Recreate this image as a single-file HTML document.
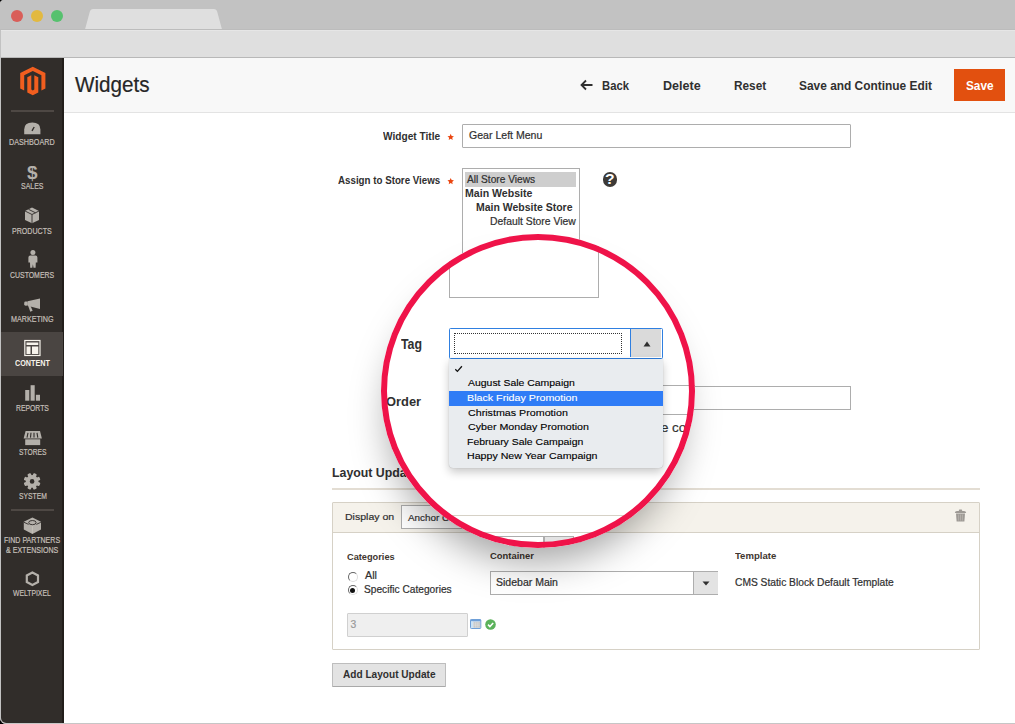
<!DOCTYPE html>
<html><head><meta charset="utf-8"><style>
html,body{margin:0;padding:0;width:1015px;height:724px;overflow:hidden;background:#000;}
#win{position:absolute;left:0;top:0;width:1015px;height:724px;overflow:hidden;border-radius:4px 0 0 6px;background:#c4c4c4;font-family:"Liberation Sans", sans-serif;}
.t{position:absolute;white-space:nowrap;font-family:"Liberation Sans", sans-serif;}
.r{position:absolute;}
.reg{-webkit-text-stroke-width:0.2px;}
svg.r{overflow:visible;}
</style></head><body>
<div id="win"><div class="r" style="left:0px;top:0px;width:1015px;height:30px;background:#c2c2c2;"></div><div class="r" style="left:11px;top:10px;width:12px;height:12px;border-radius:50%;background:#d95e59;"></div><div class="r" style="left:31px;top:10px;width:12px;height:12px;border-radius:50%;background:#e2b940;"></div><div class="r" style="left:51px;top:10px;width:12px;height:12px;border-radius:50%;background:#56c16e;"></div><svg class="r" style="left:0;top:0" width="300" height="30"><path d="M85 29.5 L90 11 Q91 9 93 9 L214 9 Q216 9 217 11 L222 29.5 Z" fill="#dfdfdf"/></svg><div class="r" style="left:0px;top:29px;width:1015px;height:1px;background:#bcbcbc;"></div><div class="r" style="left:1px;top:30px;width:1014px;height:1px;background:#e6e6e6;"></div><div class="r" style="left:1px;top:31px;width:1014px;height:26px;background:#dfdfdf;"></div><div class="r" style="left:1px;top:57px;width:1014px;height:1px;background:#b8b8b8;"></div><div class="r" style="left:0px;top:30px;width:1px;height:694px;background:#c2c2c2;"></div><div class="r" style="left:0px;top:723px;width:1015px;height:1px;background:#c6c6c6;"></div><div class="r" style="left:1px;top:58px;width:1014px;height:665px;background:#ffffff;border-bottom-left-radius:5px;"></div><div class="r" style="left:64px;top:58px;width:951px;height:54px;background:#f8f8f8;"></div><div class="r" style="left:64px;top:112px;width:951px;height:1px;background:#e3e3e3;"></div><div class="t  reg" style="left:74.50px;top:74.00px;font-size:21.95px;line-height:21.95px;font-weight:400;color:#262626;transform:scaleX(0.9424);transform-origin:0 0;">Widgets</div><svg class="r" style="left:580px;top:79px" width="14" height="12"><path d="M1.5 6 H12.5 M6 1.5 L1.5 6 L6 10.5" stroke="#303030" stroke-width="1.8" fill="none"/></svg><div class="t  bld" style="left:601.74px;top:80.00px;font-size:12.79px;line-height:12.79px;font-weight:700;color:#303030;transform:scaleX(0.8811);transform-origin:0 0;">Back</div><div class="t  bld" style="left:662.75px;top:80.00px;font-size:12.79px;line-height:12.79px;font-weight:700;color:#303030;transform:scaleX(0.9814);transform-origin:0 0;">Delete</div><div class="t  bld" style="left:733.70px;top:80.00px;font-size:12.79px;line-height:12.79px;font-weight:700;color:#303030;transform:scaleX(0.9231);transform-origin:0 0;">Reset</div><div class="t  bld" style="left:798.94px;top:80.00px;font-size:12.79px;line-height:12.79px;font-weight:700;color:#303030;transform:scaleX(0.9319);transform-origin:0 0;">Save and Continue Edit</div><div class="r" style="left:954px;top:69px;width:51px;height:32px;background:#e2500f;"></div><div class="t  bld" style="left:965.65px;top:80.00px;font-size:12.79px;line-height:12.79px;font-weight:700;color:#ffffff;transform:scaleX(0.9221);transform-origin:0 0;">Save</div><div class="r" style="left:1px;top:58px;width:63px;height:665px;background:#312d2a;border-bottom-left-radius:5px;"></div><div class="r" style="left:62px;top:58px;width:2px;height:665px;background:#221e1b;"></div><svg class="r" style="left:0;top:58px" width="64" height="45"><g transform="translate(0,-58)" fill="#f15e1f"><path d="M20.2 73 L32.8 66.8 L45.4 73 L45.4 88.4 L41.4 90.6 L41.4 75.3 L32.8 71 L24.2 75.3 L24.2 90.6 L20.2 88.4 Z"/><path d="M27.3 77.3 L31.3 75.3 L31.3 89.6 L32.8 90.4 L34.3 89.6 L34.3 75.3 L38.3 77.3 L38.3 92.6 L32.8 95.2 L27.3 92.6 Z"/></g></svg><div class="r" style="left:11px;top:110px;width:43px;height:2px;background:#4e4844;"></div><div class="r" style="left:1px;top:332px;width:62px;height:44px;background:#4a4542;"></div><div class="t  reg" style="left:9.41px;top:138.00px;font-size:8.58px;line-height:8.58px;font-weight:400;color:#c4bfb8;transform:scaleX(0.8396);transform-origin:0 0;">DASHBOARD</div><div class="t  reg" style="left:21.39px;top:182.00px;font-size:8.58px;line-height:8.58px;font-weight:400;color:#c4bfb8;transform:scaleX(0.8105);transform-origin:0 0;">SALES</div><div class="t  reg" style="left:12.42px;top:227.00px;font-size:8.58px;line-height:8.58px;font-weight:400;color:#c4bfb8;transform:scaleX(0.8245);transform-origin:0 0;">PRODUCTS</div><div class="t  reg" style="left:10.15px;top:271.00px;font-size:8.58px;line-height:8.58px;font-weight:400;color:#c4bfb8;transform:scaleX(0.8076);transform-origin:0 0;">CUSTOMERS</div><div class="t  reg" style="left:10.91px;top:315.00px;font-size:8.58px;line-height:8.58px;font-weight:400;color:#c4bfb8;transform:scaleX(0.8357);transform-origin:0 0;">MARKETING</div><div class="t  bld" style="left:14.71px;top:359.00px;font-size:8.58px;line-height:8.58px;font-weight:700;color:#f7f3eb;transform:scaleX(0.8432);transform-origin:0 0;">CONTENT</div><div class="t  reg" style="left:15.94px;top:404.00px;font-size:8.58px;line-height:8.58px;font-weight:400;color:#c4bfb8;transform:scaleX(0.7952);transform-origin:0 0;">REPORTS</div><div class="t  reg" style="left:18.60px;top:448.00px;font-size:8.58px;line-height:8.58px;font-weight:400;color:#c4bfb8;transform:scaleX(0.7828);transform-origin:0 0;">STORES</div><div class="t  reg" style="left:18.60px;top:492.00px;font-size:8.58px;line-height:8.58px;font-weight:400;color:#c4bfb8;transform:scaleX(0.7867);transform-origin:0 0;">SYSTEM</div><div class="t  reg" style="left:4.22px;top:536.00px;font-size:8.58px;line-height:8.58px;font-weight:400;color:#c4bfb8;transform:scaleX(0.8209);transform-origin:0 0;">FIND PARTNERS</div><div class="t  reg" style="left:6.05px;top:546.00px;font-size:8.58px;line-height:8.58px;font-weight:400;color:#c4bfb8;transform:scaleX(0.8240);transform-origin:0 0;">&amp; EXTENSIONS</div><div class="t  reg" style="left:13.47px;top:589.00px;font-size:8.58px;line-height:8.58px;font-weight:400;color:#c4bfb8;transform:scaleX(0.7947);transform-origin:0 0;">WELTPIXEL</div><div class="r" style="left:11px;top:509px;width:43px;height:2px;background:#4e4844;"></div><svg class="r" style="left:0;top:0" width="64" height="724" fill="#b4b0aa"><path d="M24.2 134.2 L24.2 129.5 Q24.2 122.6 32.3 122.6 Q40.4 122.6 40.4 129.5 L40.4 134.2 Z"/><path d="M32 130.8 L34.2 127" stroke="#312d2a" stroke-width="1.4"/><text x="32.3" y="178.5" text-anchor="middle" font-family="Liberation Sans" font-weight="700" font-size="19">$</text><path d="M32 207.5 L39 211 L39 220 L32 223.2 L25 220 L25 211 Z"/><path d="M25 211 L32 214.5 L39 211 M32 214.5 L32 223 M28.5 209.3 L35.5 212.8" stroke="#312d2a" stroke-width="0.9" fill="none"/><circle cx="32.9" cy="252.6" r="2.5"/><path d="M30.2 255.6 L35.6 255.6 Q37.3 255.8 37.4 257.6 L37.4 262.6 L35.8 262.6 L35.6 267.8 L33.5 267.8 L32.9 264.2 L32.3 267.8 L30.2 267.8 L30 262.6 L28.4 262.6 L28.4 257.6 Q28.5 255.8 30.2 255.6 Z"/><path d="M27.5 301.3 L40 298.5 L40 309 L27.5 305.7 Z"/><rect x="24.2" y="301.5" width="3.6" height="4.2" rx="1.4"/><path d="M28 305.4 L30.6 305.9 L32.6 310.8 L30.3 311.7 Z"/><rect x="24.8" y="340.5" width="15.2" height="15" fill="none" stroke="#f7f3eb" stroke-width="1.2"/><rect x="26.5" y="342.5" width="11.8" height="2.5" fill="#f7f3eb"/><rect x="26.5" y="346.5" width="4" height="7.5" fill="#f7f3eb"/><rect x="32" y="346.5" width="6.3" height="7.5" fill="#f7f3eb"/><rect x="25.2" y="390" width="4.1" height="10.7"/><rect x="30.6" y="385.2" width="4.1" height="15.5"/><rect x="35.9" y="394.8" width="4.1" height="5.9"/><path d="M25.6 430.9 L40 430.9 L41.9 438.6 L23.6 438.6 Z"/><path d="M28 432.8 L27 437.6 M31 432.8 L30.5 437.6 M34 432.8 L34 437.6 M37 432.8 L37.8 437.6" stroke="#312d2a" stroke-width="1.1"/><rect x="25.2" y="439.3" width="15" height="5.8"/><g transform="translate(32.1,481.4)"><rect x="-1.8" y="-8.4" width="3.6" height="4" rx="1" transform="rotate(22.5)"/><rect x="-1.8" y="-8.4" width="3.6" height="4" rx="1" transform="rotate(67.5)"/><rect x="-1.8" y="-8.4" width="3.6" height="4" rx="1" transform="rotate(112.5)"/><rect x="-1.8" y="-8.4" width="3.6" height="4" rx="1" transform="rotate(157.5)"/><rect x="-1.8" y="-8.4" width="3.6" height="4" rx="1" transform="rotate(202.5)"/><rect x="-1.8" y="-8.4" width="3.6" height="4" rx="1" transform="rotate(247.5)"/><rect x="-1.8" y="-8.4" width="3.6" height="4" rx="1" transform="rotate(292.5)"/><rect x="-1.8" y="-8.4" width="3.6" height="4" rx="1" transform="rotate(337.5)"/><circle r="6.3" /><circle r="2.3" fill="#312d2a"/></g><path d="M32.4 517.6 L41 521.7 L41 529.6 L32.4 534 L23.8 529.6 L23.8 521.7 Z"/><path d="M24 522.3 L28.6 524.4 M36.3 524.4 L40.8 522.3" stroke="#312d2a" stroke-width="0.9" fill="none"/><ellipse cx="32.4" cy="522.6" rx="3.7" ry="2.1" fill="none" stroke="#312d2a" stroke-width="0.9"/><path d="M32.4 526 V533.5" stroke="#cfcac3" stroke-width="0.6"/><path d="M32.4 572.5 L38 575.5 L38 582 L32.4 585 L26.8 582 L26.8 575.5 Z" fill="none" stroke="#b4b0aa" stroke-width="2.2"/></svg><div class="t  bld" style="left:383.20px;top:131.00px;font-size:11.48px;line-height:11.48px;font-weight:700;color:#303030;transform:scaleX(0.8827);transform-origin:0 0;">Widget Title</div><svg class="r" style="left:0;top:0" width="1" height="1"><polygon points="450.70,133.80 451.64,135.91 453.93,136.15 452.22,137.69 452.70,139.95 450.70,138.80 448.70,139.95 449.18,137.69 447.47,136.15 449.76,135.91" fill="#ea4610"/></svg><div class="r" style="left:462px;top:124px;width:389px;height:24px;border:1px solid #adadad;border-radius:1px;box-sizing:border-box;background:#fff;"></div><div class="t  reg" style="left:469.37px;top:130.00px;font-size:10.61px;line-height:10.61px;font-weight:400;color:#303030;transform:scaleX(0.9946);transform-origin:0 0;">Gear Left Menu</div><div class="t  bld" style="left:338.06px;top:175.00px;font-size:11.48px;line-height:11.48px;font-weight:700;color:#303030;transform:scaleX(0.8504);transform-origin:0 0;">Assign to Store Views</div><svg class="r" style="left:0;top:0" width="1" height="1"><polygon points="450.70,178.00 451.64,180.11 453.93,180.35 452.22,181.89 452.70,184.15 450.70,183.00 448.70,184.15 449.18,181.89 447.47,180.35 449.76,180.11" fill="#ea4610"/></svg><div class="r" style="left:462px;top:168px;width:118px;height:132px;border:1px solid #adadad;box-sizing:border-box;background:#fff;"></div><div class="r" style="left:465px;top:172px;width:111px;height:15px;background:#cecece;"></div><div class="t  reg" style="left:467.07px;top:175.00px;font-size:10.03px;line-height:10.03px;font-weight:400;color:#303030;transform:scaleX(1.0135);transform-origin:0 0;">All Store Views</div><div class="t  bld" style="left:465.39px;top:189.00px;font-size:10.03px;line-height:10.03px;font-weight:700;color:#303030;transform:scaleX(1.0558);transform-origin:0 0;">Main Website</div><div class="t  bld" style="left:475.69px;top:203.00px;font-size:10.03px;line-height:10.03px;font-weight:700;color:#303030;transform:scaleX(1.0468);transform-origin:0 0;">Main Website Store</div><div class="t  reg" style="left:489.64px;top:217.00px;font-size:10.03px;line-height:10.03px;font-weight:400;color:#303030;transform:scaleX(1.0366);transform-origin:0 0;">Default Store View</div><div class="r" style="left:602.6px;top:172.2px;width:14.8px;height:14.8px;border-radius:50%;background:#3d3a37;"></div><div class="t  bld" style="left:604.79px;top:173.00px;font-size:13.95px;line-height:13.95px;font-weight:700;color:#ffffff;transform:scaleX(1.1300);transform-origin:0 0;">?</div><div class="r" style="left:540px;top:386px;width:311px;height:24px;border:1px solid #adadad;box-sizing:border-box;background:#fff;"></div><div class="t  bld" style="left:332.17px;top:467.00px;font-size:12.94px;line-height:12.94px;font-weight:700;color:#303030;transform:scaleX(0.9528);transform-origin:0 0;">Layout Updates</div><div class="r" style="left:332px;top:488px;width:648px;height:2px;background:#e3ddd3;"></div><div class="r" style="left:332px;top:502px;width:648px;height:148px;border:1px solid #d6d1c6;box-sizing:border-box;background:#fff;border-radius:1px;"></div><div class="r" style="left:333px;top:503px;width:646px;height:29px;background:#f5f2eb;border-bottom:1px solid #d6d1c6;"></div><div class="t  reg" style="left:345.23px;top:512.00px;font-size:9.88px;line-height:9.88px;font-weight:400;color:#303030;transform:scaleX(1.0675);transform-origin:0 0;">Display on</div><div class="r" style="left:401px;top:505px;width:170px;height:24px;border:1px solid #adadad;box-sizing:border-box;background:#fff;"></div><div class="t  reg" style="left:407.88px;top:513.00px;font-size:9.883720930232558px;line-height:9.883720930232558px;font-weight:400;color:#303030;">Anchor Categories</div><svg class="r" style="left:954px;top:509px" width="13" height="13" fill="#9e9a95"><path d="M0.8 4 Q1 2.2 3 2 L10 2 Q12 2.2 12.2 4 Z"/><rect x="4.8" y="0.6" width="3.4" height="1.8" rx="0.8"/><path d="M2 4.6 L11 4.6 L10.4 12.4 L2.6 12.4 Z"/><path d="M4.6 5.5 V11.6 M6.5 5.5 V11.6 M8.4 5.5 V11.6" stroke="#bdb9b3" stroke-width="0.7"/></svg><div class="t  bld" style="left:347.33px;top:553.00px;font-size:9.16px;line-height:9.16px;font-weight:700;color:#41362f;transform:scaleX(1.0064);transform-origin:0 0;">Categories</div><div class="t  bld" style="left:489.92px;top:552.00px;font-size:9.16px;line-height:9.16px;font-weight:700;color:#41362f;transform:scaleX(1.0272);transform-origin:0 0;">Container</div><div class="t  bld" style="left:735.10px;top:552.00px;font-size:9.16px;line-height:9.16px;font-weight:700;color:#41362f;transform:scaleX(1.0425);transform-origin:0 0;">Template</div><div class="r" style="left:347.5px;top:571.5px;width:10px;height:10px;border-radius:50%;border:1px solid #666;box-sizing:border-box;border-right-color:#ddd;border-bottom-color:#ddd;background:#fff;"></div><div class="r" style="left:347.5px;top:585px;width:10px;height:10px;border-radius:50%;border:1px solid #666;box-sizing:border-box;border-right-color:#ddd;border-bottom-color:#ddd;background:#fff;"></div><div class="r" style="left:350px;top:587.5px;width:5px;height:5px;border-radius:50%;background:#111;"></div><div class="t  reg" style="left:364.77px;top:571.00px;font-size:10.32px;line-height:10.32px;font-weight:400;color:#303030;transform:scaleX(1.0410);transform-origin:0 0;">All</div><div class="t  reg" style="left:364.34px;top:585.00px;font-size:10.32px;line-height:10.32px;font-weight:400;color:#303030;transform:scaleX(0.9866);transform-origin:0 0;">Specific Categories</div><div class="r" style="left:347px;top:613px;width:121px;height:24px;border:1px solid #d0d0d0;box-sizing:border-box;background:#efefef;border-radius:1px;"></div><div class="t  reg" style="left:350.61px;top:620.00px;font-size:10.3px;line-height:10.3px;font-weight:400;color:#9a9a9a;">3</div><svg class="r" style="left:470px;top:619px" width="12" height="10"><rect x="0.5" y="0.5" width="10.3" height="9" rx="0.8" fill="#dfe6ee" stroke="#6f9fd8" stroke-width="1"/><rect x="0.5" y="0.5" width="10.3" height="1.8" fill="#6f9fd8"/><rect x="1.2" y="2.4" width="1.6" height="6.4" fill="#c9e3f7"/><rect x="3.5" y="3.2" width="6.6" height="5.4" fill="#c4c4c4"/><path d="M3.5 5 H10 M3.5 6.8 H10 M5.7 3.2 V8.6 M7.9 3.2 V8.6" stroke="#e8e8e8" stroke-width="0.5"/></svg><svg class="r" style="left:484.5px;top:618.8px" width="11" height="11"><circle cx="5.5" cy="5.5" r="5.3" fill="#5bb25b"/><path d="M3 5.7 L4.9 7.5 L8.2 4" stroke="#fff" stroke-width="1.6" fill="none"/></svg><div class="r" style="left:490px;top:571px;width:228px;height:24px;border:1px solid #adadad;box-sizing:border-box;background:#fff;"></div><div class="r" style="left:693px;top:572px;width:24px;height:22px;background:#e3e3e3;border-left:1px solid #adadad;"></div><svg class="r" style="left:702px;top:581px" width="8" height="5"><path d="M0.5 0.5 L7.5 0.5 L4 4.5 Z" fill="#303030"/></svg><div class="t  reg" style="left:496.23px;top:578.00px;font-size:10.17px;line-height:10.17px;font-weight:400;color:#303030;transform:scaleX(1.0356);transform-origin:0 0;">Sidebar Main</div><div class="t  reg" style="left:734.69px;top:578.00px;font-size:10.17px;line-height:10.17px;font-weight:400;color:#303030;transform:scaleX(1.0092);transform-origin:0 0;">CMS Static Block Default Template</div><div class="r" style="left:332px;top:663px;width:114px;height:24px;border:1px solid #bdbdbd;border-bottom-color:#a9a9a9;box-sizing:border-box;background:#e3e3e3;border-radius:1px;"></div><div class="t  bld" style="left:342.75px;top:670.00px;font-size:10.32px;line-height:10.32px;font-weight:700;color:#303030;transform:scaleX(0.9788);transform-origin:0 0;">Add Layout Update</div><div class="r" style="left:381px;top:234px;width:314px;height:314px;border-radius:50%;box-shadow:-3px 25px 38px -11px rgba(0,0,0,0.36);"></div><div class="r" id="mag" style="left:381px;top:234px;width:314px;height:314px;border-radius:50%;overflow:hidden;background:#fff;"><div class="r" style="left:-381px;top:-234px;width:1015px;height:724px;"><div class="r" style="left:449px;top:200px;width:150px;height:98px;border:1px solid #adadad;box-sizing:border-box;background:#fff;"></div><div class="t  bld" style="left:401.28px;top:338.00px;font-size:13.81px;line-height:13.81px;font-weight:700;color:#303030;transform:scaleX(0.8943);transform-origin:0 0;">Tag</div><div class="t  bld" style="left:386.08px;top:395.00px;font-size:13.08px;line-height:13.08px;font-weight:700;color:#303030;transform:scaleX(0.9850);transform-origin:0 0;">Order</div><div class="r" style="left:449px;top:385px;width:311px;height:30px;border:1px solid #adadad;box-sizing:border-box;background:#fff;"></div><div class="t  reg" style="left:635.63px;top:421.00px;font-size:13.4px;line-height:13.4px;font-weight:400;color:#333333;">same container</div><div class="r" style="left:448.5px;top:328px;width:214.0px;height:30.5px;border:1.2px solid #2f7fe0;box-sizing:border-box;background:#fff;border-radius:1.5px;"></div><div class="r" style="left:630.3px;top:329.2px;width:31.0px;height:28.100000000000023px;background:#dadada;border-left:1.3px solid #2f7fe0;box-sizing:border-box;"></div><svg class="r" style="left:643px;top:341px" width="8" height="6"><path d="M0.5 5.5 L7.5 5.5 L4 0.5 Z" fill="#303030"/></svg><div class="r" style="left:453.5px;top:332.8px;width:168.0px;height:21.399999999999977px;border:1px dotted #333;box-sizing:border-box;"></div><div class="r" style="left:448.5px;top:358.5px;width:214px;height:109.5px;background:#e9ecef;border-radius:0 0 4px 4px;box-shadow:0 4px 10px rgba(0,0,0,0.22), 0 0 1px rgba(0,0,0,0.3);"></div><div class="r" style="left:448.5px;top:391px;width:214.0px;height:14.600000000000023px;background:#2f7cf6;"></div><svg class="r" style="left:454px;top:365px" width="10" height="8"><path d="M1.3 4.3 L3.4 6.4 L7.9 1.3" stroke="#111" stroke-width="1.3" fill="none"/></svg><div class="t  reg" style="left:468.07px;top:378.00px;font-size:9.74px;line-height:9.74px;font-weight:400;color:#000000;transform:scaleX(1.0729);transform-origin:0 0;-webkit-text-stroke:0.12px #000000;">August Sale Campaign</div><div class="t  reg" style="left:467.22px;top:393.00px;font-size:9.74px;line-height:9.74px;font-weight:400;color:#ffffff;transform:scaleX(1.0982);transform-origin:0 0;-webkit-text-stroke:0.12px #ffffff;">Black Friday Promotion</div><div class="t  reg" style="left:467.56px;top:408.00px;font-size:9.74px;line-height:9.74px;font-weight:400;color:#000000;transform:scaleX(1.0988);transform-origin:0 0;-webkit-text-stroke:0.12px #000000;">Christmas Promotion</div><div class="t  reg" style="left:467.57px;top:422.00px;font-size:9.74px;line-height:9.74px;font-weight:400;color:#000000;transform:scaleX(1.0958);transform-origin:0 0;-webkit-text-stroke:0.12px #000000;">Cyber Monday Promotion</div><div class="t  reg" style="left:467.24px;top:437.00px;font-size:9.74px;line-height:9.74px;font-weight:400;color:#000000;transform:scaleX(1.0744);transform-origin:0 0;-webkit-text-stroke:0.12px #000000;">February Sale Campaign</div><div class="t  reg" style="left:467.22px;top:451.00px;font-size:9.74px;line-height:9.74px;font-weight:400;color:#000000;transform:scaleX(1.0910);transform-origin:0 0;-webkit-text-stroke:0.12px #000000;">Happy New Year Campaign</div><div class="r" style="left:400px;top:515px;width:615px;height:1px;background:#d6d1c6;"></div><div class="r" style="left:400px;top:532px;width:615px;height:1px;background:#d6d1c6;"></div><div class="r" style="left:460px;top:536px;width:84px;height:24px;border:1px solid #adadad;box-sizing:border-box;background:#fff;"></div><div class="r" style="left:544px;top:536px;width:30px;height:24px;border:1px solid #adadad;box-sizing:border-box;background:#e3e3e3;"></div></div></div><div class="r" style="left:381px;top:234px;width:314px;height:314px;border-radius:50%;border:6.5px solid #ef1349;box-sizing:border-box;"></div></div>
</body></html>
